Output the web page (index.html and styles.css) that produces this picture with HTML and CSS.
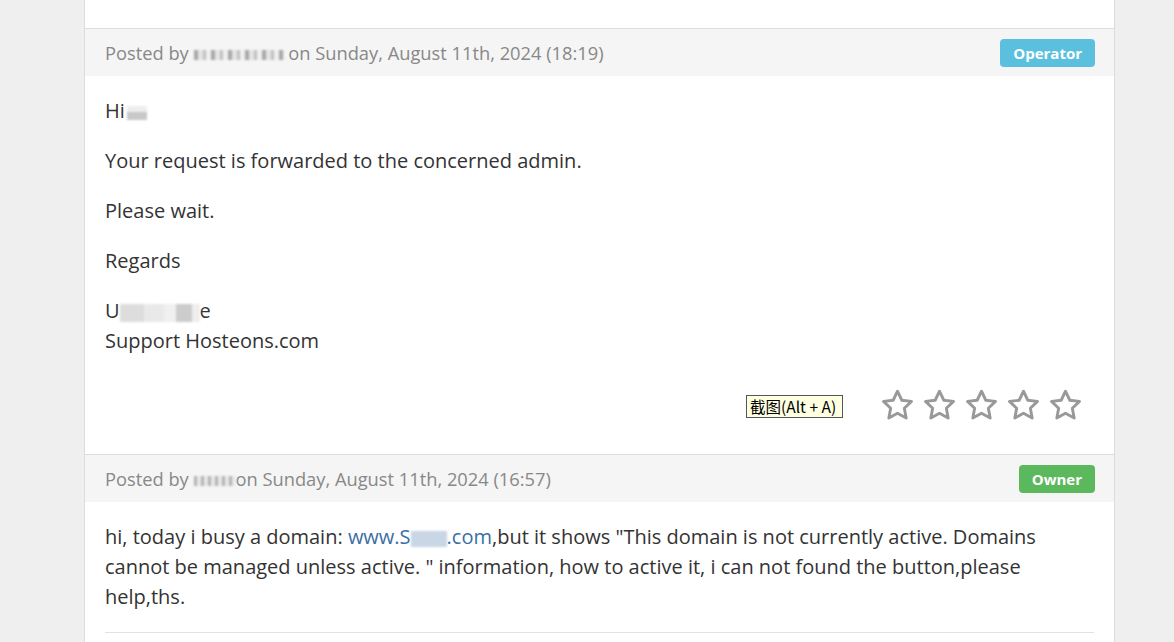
FILE: index.html
```html
<!DOCTYPE html>
<html>
<head>
<meta charset="utf-8">
<link rel="stylesheet" href="styles.css">
</head>
<body>
<div class="thread">
  <div class="prev-end"></div>

  <div class="reply">
    <div class="reply-header">
      <div class="posted">Posted by <span class="blur blur-name1"></span> on Sunday, August 11th, 2024 (18:19)</div>
      <span class="badge badge-operator">Operator</span>
    </div>
    <div class="reply-body">
      <p>Hi<span class="blur blur-hi"></span></p>
      <p>Your request is forwarded to the concerned admin.</p>
      <p>Please wait.</p>
      <p>Regards</p>
      <p>U<span class="blur blur-sig"></span>e<br>Support Hosteons.com</p>
      <div class="rating">
        <span class="tooltip">截图(Alt + A)</span>
        <div class="stars">
          <svg class="star" viewBox="0 0 24 24"><polygon points="12,2.2 14.95,8.4 21.6,9.2 16.7,13.85 17.95,20.6 12,17.3 6.05,20.6 7.3,13.85 2.4,9.2 9.05,8.4"/></svg>
          <svg class="star" viewBox="0 0 24 24"><polygon points="12,2.2 14.95,8.4 21.6,9.2 16.7,13.85 17.95,20.6 12,17.3 6.05,20.6 7.3,13.85 2.4,9.2 9.05,8.4"/></svg>
          <svg class="star" viewBox="0 0 24 24"><polygon points="12,2.2 14.95,8.4 21.6,9.2 16.7,13.85 17.95,20.6 12,17.3 6.05,20.6 7.3,13.85 2.4,9.2 9.05,8.4"/></svg>
          <svg class="star" viewBox="0 0 24 24"><polygon points="12,2.2 14.95,8.4 21.6,9.2 16.7,13.85 17.95,20.6 12,17.3 6.05,20.6 7.3,13.85 2.4,9.2 9.05,8.4"/></svg>
          <svg class="star" viewBox="0 0 24 24"><polygon points="12,2.2 14.95,8.4 21.6,9.2 16.7,13.85 17.95,20.6 12,17.3 6.05,20.6 7.3,13.85 2.4,9.2 9.05,8.4"/></svg>
        </div>
      </div>
    </div>
  </div>

  <div class="reply">
    <div class="reply-header">
      <div class="posted">Posted by <span class="blur blur-name2"></span>on Sunday, August 11th, 2024 (16:57)</div>
      <span class="badge badge-owner">Owner</span>
    </div>
    <div class="reply-body owner-body">
      <p>hi, today i busy a domain: <a href="#">www.S<span class="blur blur-link"></span>.com</a>,but it shows "This domain is not currently active. Domains cannot be managed unless active. " information, how to active it, i can not found the button,please help,ths.</p>
      <hr class="divider">
    </div>
  </div>
</div>
</body>
</html>
```

FILE: styles.css
```css
html, body {
  margin: 0;
  padding: 0;
  background: #efefef;
  font-family: "Open Sans", "Liberation Sans", sans-serif;
}

.thread {
  margin-left: 84px;
  width: 1029px;
  background: #fff;
  border-left: 1px solid #dcdcdc;
  border-right: 1px solid #dcdcdc;
  min-height: 642px;
}

.prev-end {
  height: 28px;
}

.reply {
  border-top: 1px solid #dcdcdc;
}

.reply-header {
  background: #f5f5f5;
  height: 47px;
  padding: 0 19px 0 20px;
  display: flex;
  align-items: center;
  justify-content: space-between;
}

.posted {
  color: #888;
  font-size: 18.3px;
}

.badge {
  color: #fff;
  font-weight: 700;
  font-size: 15px;
  line-height: 28px;
  height: 28px;
  padding: 0 13px;
  border-radius: 4px;
  margin-top: 1px;
}

.badge-operator { background: #5bc0de; }
.badge-owner { background: #5cb85c; }

.reply-body {
  padding: 20px 20px 20px 20px;
  color: #333;
  font-size: 20px;
  line-height: 30px;
}

.reply-body p {
  margin: 0 0 20px;
}

.owner-body {
  padding-bottom: 0;
}

.reply-body a {
  color: #3a6ea5;
  text-decoration: none;
}

.blur {
  display: inline-block;
  vertical-align: middle;
  filter: blur(1.2px);
}

.blur-name1 {
  width: 90px;
  height: 10px;
  background: repeating-linear-gradient(90deg, #888 0 4px, #ddd 4px 9px, #aaa 9px 12px, #eee 12px 17px);
  opacity: 0.7;
}

.blur-name2 {
  width: 42px;
  height: 10px;
  background: repeating-linear-gradient(90deg, #999 0 3px, #e4e4e4 3px 7px);
  opacity: 0.7;
}

.blur-hi {
  width: 20px;
  height: 14px;
  margin-left: 2px;
  background: linear-gradient(180deg, #eee 0 40%, #c8c8c8 40% 100%);
  filter: blur(1px);
}

.blur-sig {
  width: 80px;
  height: 18px;
  background: linear-gradient(90deg, #ddd 0 30%, #e9e9e9 30% 55%, #f0f0f0 55% 70%, #ccc 70% 90%, #eee 90%);
  filter: blur(1px);
}

.blur-link {
  width: 36px;
  height: 16px;
  background: #c9d6e6;
  filter: blur(1px);
}

.rating {
  position: relative;
  height: 58px;
  display: flex;
  align-items: center;
  justify-content: flex-end;
}

.stars {
  display: flex;
  gap: 7px;
  margin-right: 11px;
}

.star {
  width: 35px;
  height: 35px;
  fill: none;
  stroke: #999;
  stroke-width: 2;
  stroke-linejoin: round;
}

.tooltip {
  position: absolute;
  left: 641px;
  top: 19px;
  height: 21px;
  padding: 0 6px 0 3px;
  background: #ffffe1;
  border: 1px solid #555;
  font-family: "Noto Sans CJK SC", "Liberation Sans", sans-serif;
  font-size: 15.5px;
  line-height: 21px;
  color: #000;
}

.divider {
  border: 0;
  border-top: 1px solid #e2e2e2;
  margin: 0;
}
```
